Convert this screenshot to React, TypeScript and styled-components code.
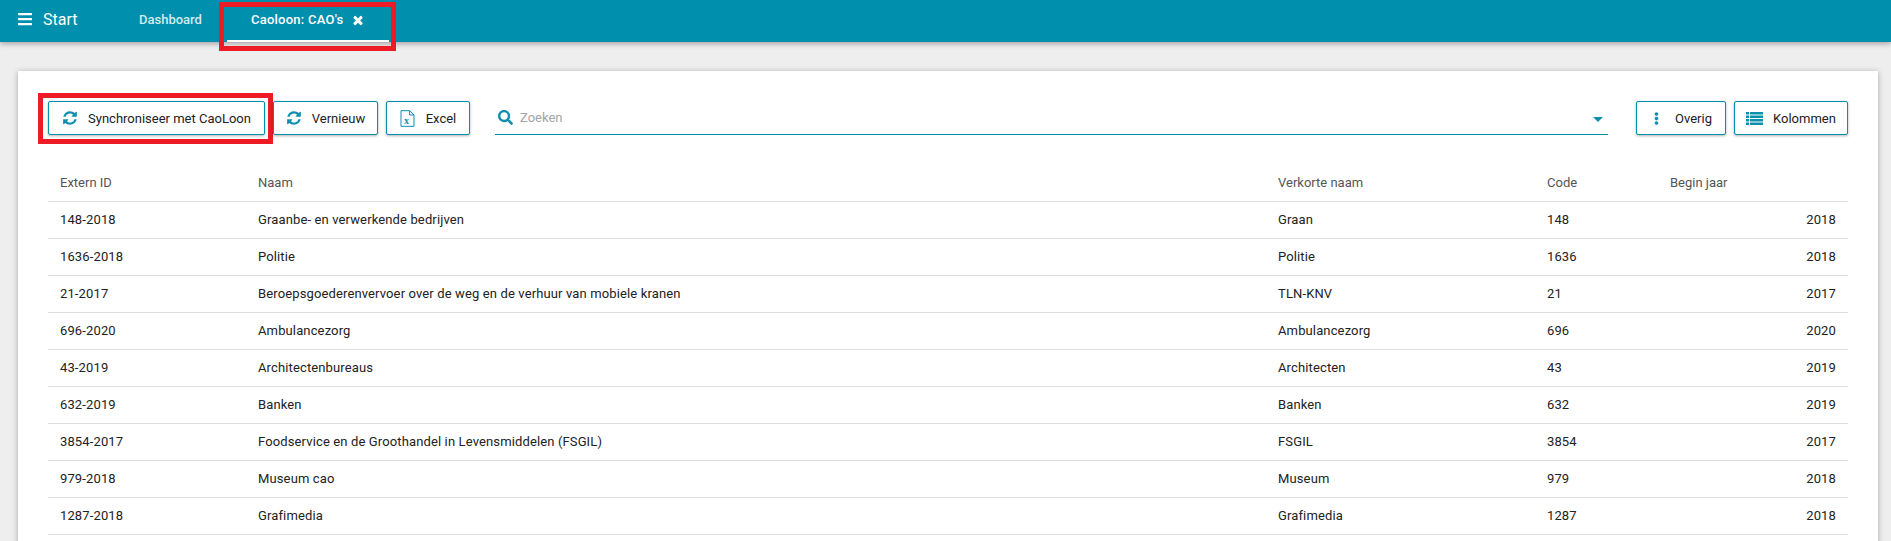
import styled, { createGlobalStyle } from "styled-components";
import { FaBars, FaEllipsisV, FaSearch } from "react-icons/fa";

const rows = [
  ["148-2018", "Graanbe- en verwerkende bedrijven", "Graan", "148", "2018"],
  ["1636-2018", "Politie", "Politie", "1636", "2018"],
  ["21-2017", "Beroepsgoederenvervoer over de weg en de verhuur van mobiele kranen", "TLN-KNV", "21", "2017"],
  ["696-2020", "Ambulancezorg", "Ambulancezorg", "696", "2020"],
  ["43-2019", "Architectenbureaus", "Architecten", "43", "2019"],
  ["632-2019", "Banken", "Banken", "632", "2019"],
  ["3854-2017", "Foodservice en de Groothandel in Levensmiddelen (FSGIL)", "FSGIL", "3854", "2017"],
  ["979-2018", "Museum cao", "Museum", "979", "2018"],
  ["1287-2018", "Grafimedia", "Grafimedia", "1287", "2018"],
];

function RefreshIcon() {
  return (
    <svg width="16" height="16" viewBox="0 0 1792 1792" fill="currentColor">
      <path d="M1639 1056q0 5-1 7-64 268-268 434.5t-478 166.5q-146 0-282.5-55t-243.5-157l-129 129q-19 19-45 19t-45-19-19-45v-448q0-26 19-45t45-19h448q26 0 45 19t19 45-19 45l-137 137q71 66 161 102t187 36q134 0 250-65t186-179q11-17 53-117 8-23 30-23h192q13 0 22.5 9.5t9.5 22.5zm25-800v448q0 26-19 45t-45 19h-448q-26 0-45-19t-19-45 19-45l138-138q-148-137-349-137-134 0-250 65t-186 179q-11 17-53 117-8 23-30 23h-199q-13 0-22.5-9.5t-9.5-22.5v-7q65-268 270-434.5t480-166.5q146 0 284 55.5t245 156.5l130-129q19-19 45-19t45 19 19 45z" />
    </svg>
  );
}

function CloseIcon() {
  return (
    <svg width="14" height="14" viewBox="0 0 1792 1792" fill="currentColor">
      <path d="M1490 1322q0 40-28 68l-136 136q-28 28-68 28t-68-28l-294-294-294 294q-28 28-68 28t-68-28l-136-136q-28-28-28-68t28-68l294-294-294-294q-28-28-28-68t28-68l136-136q28-28 68-28t68 28l294 294 294-294q28-28 68-28t68 28l136 136q28 28 28 68t-28 68l-294 294 294 294q28 28 28 68z" />
    </svg>
  );
}

function ExcelIcon() {
  return (
    <svg width="15" height="17" viewBox="0 0 15 17" fill="none">
      <path d="M1 .7h8.6L14 5v11.3H1z M9.6 .7V5H14" stroke="#0e8fae" strokeWidth="1" />
      <text x="4" y="14" fontFamily="Liberation Serif, serif" fontSize="10" fontWeight="700" fill="#0e8fae">x</text>
    </svg>
  );
}

function ColumnsIcon() {
  return (
    <svg width="17" height="13" viewBox="0 0 17 13" fill="#0e8fae">
      <path d="M0 0h3v2.5H0zM4 0h13v2.5H4zM0 3.5h3V6H0zM4 3.5h13V6H4zM0 7h3v2.5H0zM4 7h13v2.5H4zM0 10.5h3V13H0zM4 10.5h13V13H4z" />
    </svg>
  );
}

export default function App() {
  return (
    <>
      <GlobalStyle />
      <Page>
        <Header>
          <Brand>
            <FaBars size={16} />
            Start
          </Brand>
          <NavTab>Dashboard</NavTab>
          <NavTab $active>
            Caoloon: CAO's
            <CloseIcon />
            <TabMark />
          </NavTab>
        </Header>
        <Card>
          <Toolbar>
            <Button $width={217} $gap={10}>
              <RefreshIcon />
              Synchroniseer met CaoLoon
              <ButtonMark />
            </Button>
            <Button $width={105} $gap={10}>
              <RefreshIcon />
              Vernieuw
            </Button>
            <Button $width={84} $gap={11}>
              <ExcelIcon />
              Excel
            </Button>
            <Search>
              <FaSearch size={15} />
              <SearchLabel>Zoeken</SearchLabel>
              <Caret />
            </Search>
            <Button $width={90} $gap={12}>
              <FaEllipsisV size={13} />
              Overig
            </Button>
            <Button $width={114} $gap={10}>
              <ColumnsIcon />
              Kolommen
            </Button>
          </Toolbar>
          <Table>
            <colgroup>
              <col width="198" />
              <col width="1020" />
              <col width="269" />
              <col width="123" />
              <col width="190" />
            </colgroup>
            <thead>
              <tr>
                <Th>Extern ID</Th>
                <Th>Naam</Th>
                <Th>Verkorte naam</Th>
                <Th>Code</Th>
                <Th>Begin jaar</Th>
              </tr>
            </thead>
            <tbody>
              {rows.map((row) => (
                <tr key={row[0]}>
                  <Td>{row[0]}</Td>
                  <Td>{row[1]}</Td>
                  <Td>{row[2]}</Td>
                  <Td>{row[3]}</Td>
                  <YearCell>{row[4]}</YearCell>
                </tr>
              ))}
            </tbody>
          </Table>
        </Card>
      </Page>
    </>
  );
}

const GlobalStyle = createGlobalStyle`
  html, body {
    margin: 0;
    height: 100%;
    overflow: hidden;
    background: #eeeeee;
    font-family: Roboto, "Liberation Sans", sans-serif;
  }
`;

const Page = styled.div`
  height: 541px;
  overflow: hidden;
`;

const Header = styled.header`
  height: 42px;
  display: flex;
  align-items: stretch;
  background: #008fad;
  color: #fff;
  box-shadow: 0 2px 5px rgba(0, 0, 0, 0.3);
  position: relative;
`;

const Brand = styled.div`
  width: 127px;
  box-sizing: border-box;
  padding: 0 0 4px 17px;
  display: flex;
  align-items: center;
  gap: 10px;
  font-size: 16px;
`;

const NavTab = styled.div<{ $active?: boolean }>`
  position: relative;
  display: flex;
  align-items: center;
  gap: 11px;
  padding: 0 12px 3px;
  box-sizing: border-box;
  font-size: 13px;
  font-weight: 500;
  white-space: nowrap;
  color: ${(p) => (p.$active ? "#fff" : "#d3ebf1")};
  ${(p) =>
    p.$active &&
    `
    width: 162px;
    padding: 0 24px 1px;
    margin-left: 13px;
    gap: 7px;
    letter-spacing: 0.25px;
    border-bottom: 2px solid #fff;
  `}
`;

const TabMark = styled.span`
  position: absolute;
  left: -8px;
  top: 2px;
  width: 177px;
  height: 49px;
  box-sizing: border-box;
  border: 5px solid #ed1c24;
  pointer-events: none;
`;

const Card = styled.main`
  margin: 29px 13px 0 18px;
  height: 480px;
  padding: 30px;
  box-sizing: border-box;
  background: #fff;
  box-shadow: 0 1px 6px rgba(0, 0, 0, 0.3);
`;

const Toolbar = styled.div`
  display: flex;
  align-items: center;
  gap: 8px;
  height: 34px;
`;

const Button = styled.button<{ $width: number; $gap: number }>`
  position: relative;
  width: ${(p) => p.$width}px;
  height: 34px;
  flex: none;
  display: inline-flex;
  align-items: center;
  justify-content: center;
  gap: ${(p) => p.$gap}px;
  padding: 0;
  box-sizing: border-box;
  background: #fff;
  border: 1px solid #008fad;
  border-radius: 2px;
  box-shadow: 0 1px 3px rgba(0, 0, 0, 0.3);
  color: #222;
  font-family: inherit;
  font-size: 13px;
  white-space: nowrap;

  svg {
    color: #0e8fae;
    flex: none;
  }
`;

const ButtonMark = styled.span`
  position: absolute;
  left: -11px;
  top: -9px;
  width: 235px;
  height: 51px;
  box-sizing: border-box;
  border: 5px solid #ed1c24;
  pointer-events: none;
`;

const Search = styled.div`
  flex: 1;
  height: 34px;
  margin: 0 20px 0 17px;
  padding: 0 5px 0 3px;
  box-sizing: border-box;
  display: flex;
  align-items: center;
  gap: 7px;
  border-bottom: 1px solid #008fad;
  color: #0e8fae;
`;

const SearchLabel = styled.span`
  flex: 1;
  font-size: 13px;
  color: #a4a4a4;
`;

const Caret = styled.span`
  width: 0;
  height: 0;
  border-left: 5px solid transparent;
  border-right: 5px solid transparent;
  border-top: 5px solid #0e8fae;
  margin-top: 3px;
`;

const Table = styled.table`
  width: 1800px;
  margin-top: 30px;
  border-collapse: collapse;
  table-layout: fixed;
  font-size: 13px;
`;

const Th = styled.th`
  height: 36px;
  padding: 0 12px;
  box-sizing: border-box;
  text-align: left;
  font-weight: 400;
  color: #555;
  border-bottom: 1px solid #ddd;
`;

const Td = styled.td`
  height: 37px;
  padding: 0 12px;
  box-sizing: border-box;
  color: #222;
  letter-spacing: 0.13px;
  border-bottom: 1px solid #ddd;
`;

const YearCell = styled(Td)`
  text-align: right;
`;
